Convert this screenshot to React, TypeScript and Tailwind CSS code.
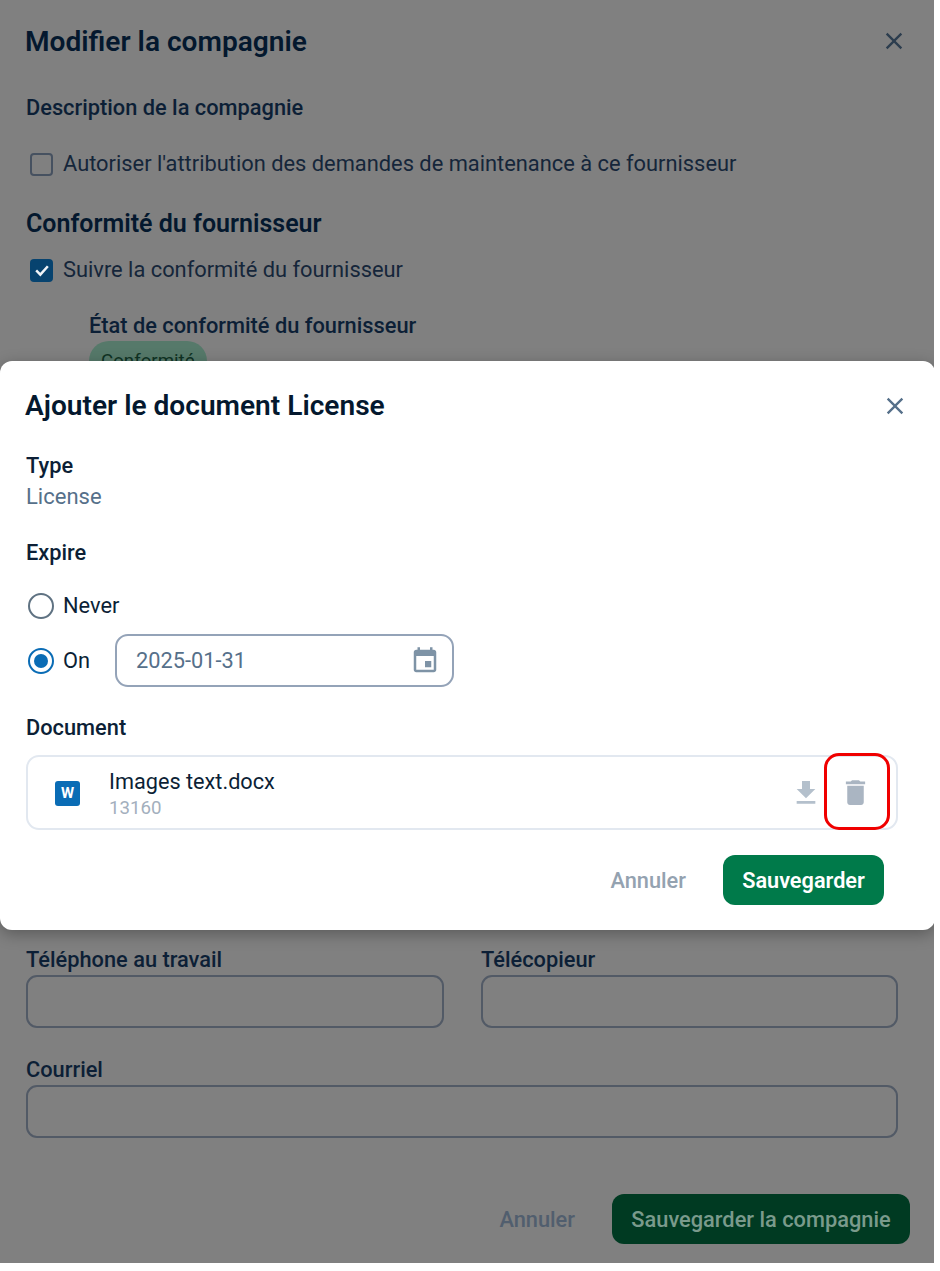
import type { ReactNode } from "react";

const closePath =
  "M19 6.41L17.59 5 12 10.59 6.41 5 5 6.41 10.59 12 5 17.59 6.41 19 12 13.41 17.59 19 19 17.59 13.41 12z";

function MdIcon({ d, className }: { d: string; className: string }) {
  return (
    <svg viewBox="0 0 24 24" fill="currentColor" className={className}>
      <path d={d} />
    </svg>
  );
}

function Label({ children, className = "" }: { children: ReactNode; className?: string }) {
  return <div className={`text-[21.8px] leading-[28px] font-medium ${className}`}>{children}</div>;
}

function BackgroundForm() {
  return (
    <div className="flex flex-col h-full">
      <div className="flex items-center justify-between pl-[25px] pr-[26px] pt-[25px]">
        <h1 className="text-[28.1px] leading-[34px] font-semibold text-[#04182e]">Modifier la compagnie</h1>
        <MdIcon d={closePath} className="mb-[2px] w-[28px] h-[28px] text-[#2c3d4e]" />
      </div>
      <Label className="pl-[26px] pt-[35px] text-[#0c1f36]">Description de la compagnie</Label>
      <div className="flex items-center gap-[10px] pl-[30px] pt-[28px] text-[21.85px] leading-[28px] text-[#15263a]">
        <span className="w-[23px] h-[23px] rounded-[4px] border-2 border-[#465160]" />
        Autoriser l'attribution des demandes de maintenance à ce fournisseur
      </div>
      <div className="pl-[26px] pt-[30px] text-[25px] leading-[32px] font-semibold text-[#04182e]">Conformité du fournisseur</div>
      <div className="flex items-center gap-[10px] pl-[30px] pt-[16px] text-[21.85px] leading-[28px] text-[#15263a]">
        <span className="w-[23px] h-[23px] rounded-[4px] bg-[#07436f] flex items-center justify-center">
          <svg viewBox="0 0 24 24" className="w-[20px] h-[20px] text-[#f0f4f8]" fill="none" stroke="currentColor" strokeWidth="3">
            <path d="M5 12.5l5 5 9-10" />
          </svg>
        </span>
        Suivre la conformité du fournisseur
      </div>
      <Label className="pl-[89px] pt-[28px] text-[#0c1f36]">État de conformité du fournisseur</Label>
      <div className="pl-[89px] pt-[1px]">
        <span className="inline-block h-[40px] px-[12px] pt-[9px] rounded-full bg-[#56796a] text-[18.7px] leading-[22px] text-[#0f3324]">Conformité</span>
      </div>

      <div className="grid grid-cols-[418px_417px] gap-x-[37px] pl-[26px] pt-[565px]">
        <div>
          <Label className="text-[#0c1f36]">Téléphone au travail</Label>
          <div className="h-[53px] mt-[1px] rounded-[11px] border-2 border-[#525a66]" />
        </div>
        <div>
          <Label className="text-[#0c1f36]">Télécopieur</Label>
          <div className="h-[53px] mt-[1px] rounded-[11px] border-2 border-[#525a66]" />
        </div>
      </div>
      <div className="pl-[26px] pr-[36px] pt-[28px]">
        <Label className="text-[#0c1f36]">Courriel</Label>
        <div className="h-[53px] mt-[1px] rounded-[11px] border-2 border-[#525a66]" />
      </div>
      <div className="flex items-center justify-end gap-[37px] pr-[24px] pt-[56px]">
        <span className="pt-[2px] text-[21.8px] font-medium text-[#515e6e]">Annuler</span>
        <span className="h-[50px] w-[298px] pt-[2px] flex items-center justify-center rounded-[12px] bg-[#003a22] text-[21.8px] font-medium text-[#7a9a8c]">
          Sauvegarder la compagnie
        </span>
      </div>
    </div>
  );
}

function DocumentDialog() {
  return (
    <div className="absolute left-0 top-[361px] w-[935px] h-[569px] bg-white rounded-[12px] shadow-[0_4px_16px_rgba(0,0,0,0.3)]">
      <div className="flex items-center justify-between pl-[25px] pr-[26px] pt-[28px]">
        <h2 className="text-[28.1px] leading-[34px] font-semibold text-[#04182e]">Ajouter le document License</h2>
        <MdIcon d={closePath} className="w-[28px] h-[28px] text-[#56708a]" />
      </div>
      <Label className="pl-[26px] pt-[29px] text-[#0c1f36]">Type</Label>
      <div className="pl-[26px] pt-[3px] text-[22px] leading-[27px] text-[#56708a]">License</div>
      <Label className="pl-[26px] pt-[29px] text-[#0c1f36]">Expire</Label>

      <div className="flex items-center gap-[9px] pl-[28px] pt-[25px] text-[21.8px] leading-[28px] text-[#0c1f36]">
        <span className="w-[26px] h-[26px] rounded-full border-2 border-[#5f7282]" />
        Never
      </div>
      <div className="flex items-center pl-[28px] pt-[14px] text-[21.8px] leading-[28px] text-[#0c1f36]">
        <span className="w-[26px] h-[26px] rounded-full border-2 border-[#0a6cb5] flex items-center justify-center">
          <span className="w-[14px] h-[14px] rounded-full bg-[#0a6cb5]" />
        </span>
        <span className="ml-[9px] w-[52px]">On</span>
        <div className="w-[339px] h-[53px] flex items-center justify-between pl-[19px] pr-[12px] rounded-[13px] border-2 border-[#94a3b8]">
          <span className="text-[#56708a]">2025-01-31</span>
          <MdIcon
            d="M17 12h-5v5h5v-5zM16 1v2H8V1H6v2H5c-1.11 0-1.99.9-1.99 2L3 19c0 1.1.89 2 2 2h14c1.1 0 2-.9 2-2V5c0-1.1-.9-2-2-2h-1V1h-2zm3 18H5V8h14v11z"
            className="w-[30px] h-[30px] text-[#7e93a6]"
          />
        </div>
      </div>
      <Label className="pl-[26px] pt-[27px] text-[#0c1f36]">Document</Label>

      <div className="relative flex items-center ml-[26px] mt-[13px] w-[872px] h-[75px] rounded-[13px] border-2 border-[#e2e8f0] pl-[27px] pr-[24px]">
        <span className="w-[25px] h-[25px] mt-[1px] rounded-[3px] bg-[#0a6cb5] flex items-center justify-center text-white text-[15px] font-bold">W</span>
        <div className="ml-[29px] pt-[2px] flex-1">
          <div className="text-[21.7px] leading-[27px] text-[#0c1f36]">Images text.docx</div>
          <div className="mt-[1px] text-[18.7px] leading-[24px] text-[#a3afbd]">13160</div>
        </div>
        <MdIcon d="M19 9h-4V3H9v6H5l7 7 7-7zM5 18v2h14v-2H5z" className="mt-[1px] w-[32px] h-[32px] text-[#b4c0cc]" />
        <MdIcon
          d="M6 19c0 1.1.9 2 2 2h8c1.1 0 2-.9 2-2V7H6v12zM19 4h-3.5l-1-1h-5l-1 1H5v2h14V4z"
          className="ml-[17px] w-[33px] h-[33px] text-[#aab5c2]"
        />
        <span className="absolute left-[796px] top-[-4px] w-[66px] h-[77px] rounded-[15px] border-[3px] border-[#f00000]" />
      </div>

      <div className="flex items-center justify-end gap-[37px] pr-[51px] pt-[25px]">
        <span className="pt-[2px] text-[21.8px] font-medium text-[#94a2b0]">Annuler</span>
        <span className="h-[50px] w-[161px] pt-[2px] flex items-center justify-center rounded-[12px] bg-[#007a4a] text-[21.7px] font-semibold text-white">
          Sauvegarder
        </span>
      </div>
    </div>
  );
}

export default function App() {
  return (
    <div className="w-[940px] h-[1271px] bg-white font-['Roboto',sans-serif]">
      <div className="relative w-[934px] h-[1263px] bg-[#808080] overflow-hidden">
        <BackgroundForm />
        <DocumentDialog />
      </div>
    </div>
  );
}
